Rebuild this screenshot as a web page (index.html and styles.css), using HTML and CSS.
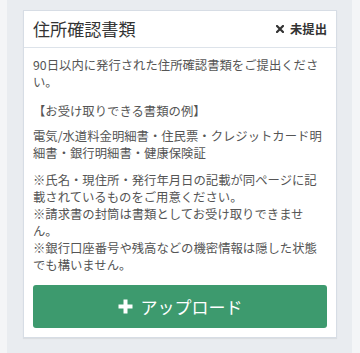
FILE: index.html
```html
<!DOCTYPE html>
<html lang="ja">
<head>
<meta charset="utf-8">
<link rel="stylesheet" href="styles.css">
</head>
<body>
<div class="page">
  <div class="card">
    <div class="card-header">
      <div class="title">住所確認書類</div>
      <div class="status">
        <svg class="x-icon" width="8" height="8" viewBox="0 0 8 8"><path d="M1 1L7 7M7 1L1 7" stroke="#333" stroke-width="2.2" stroke-linecap="square"/></svg>
        <span>未提出</span>
      </div>
    </div>
    <div class="card-body">
      <p class="p1">90日以内に発行された住所確認書類をご提出ください。</p>
      <p class="p2">【お受け取りできる書類の例】</p>
      <p class="p3">電気/水道料金明細書・住民票・クレジットカード明細書・銀行明細書・健康保険証</p>
      <p class="p4">※氏名・現住所・発行年月日の記載が同ページに記載されているものをご用意ください。<br>※請求書の封筒は書類としてお受け取りできません。<br>※銀行口座番号や残高などの機密情報は隠した状態でも構いません。</p>
      <button class="upload">
        <svg class="plus" width="15" height="15" viewBox="0 0 15 15"><path d="M7.5 0.5V14.5M0.5 7.5H14.5" stroke="#fff" stroke-width="4"/></svg>
        <span>アップロード</span>
      </button>
    </div>
  </div>
</div>
</body>
</html>
```

FILE: styles.css
```css
html, body {
  margin: 0;
  padding: 0;
}
body {
  background: #f4f5f7;
  font-family: "Noto Sans CJK JP", "Noto Sans", sans-serif;
}
.page {
  margin: 0 8px 0 7px;
  background: #e9ecf0;
  padding: 10px 15px 12px 16px;
  min-height: 353px;
  box-sizing: border-box;
}
.card {
  background: #fff;
  border: 1px solid #d7dde5;
  box-shadow: 0 1px 1px rgba(0,0,0,0.06);
}
.card-header {
  height: 37px;
  box-sizing: border-box;
  border-bottom: 1px solid #dde3ea;
  display: flex;
  align-items: center;
  justify-content: space-between;
  padding: 0 9px;
}
.title {
  font-size: 17.1px;
  color: #333;
  line-height: 1;
}
.status {
  display: flex;
  align-items: center;
  gap: 6px;
  font-size: 12.35px;
  font-weight: bold;
  color: #333;
}
.card-body {
  padding: 9px;
  color: #555;
  font-size: 12.35px;
  line-height: 17px;
}
.card-body p {
  margin: 0;
}
.card-body .p1 { margin-bottom: 12px; }
.card-body .p2 { margin-bottom: 8px; }
.card-body .p3 { margin-bottom: 10px; }
.upload {
  display: flex;
  align-items: center;
  justify-content: center;
  gap: 8px;
  width: 100%;
  height: 43px;
  margin-top: 11px;
  border: none;
  border-radius: 3px;
  background: #3d9a6e;
  color: #fff;
  font-family: "Noto Sans CJK JP", "Noto Sans", sans-serif;
  font-size: 17px;
  padding: 0;
}
```
